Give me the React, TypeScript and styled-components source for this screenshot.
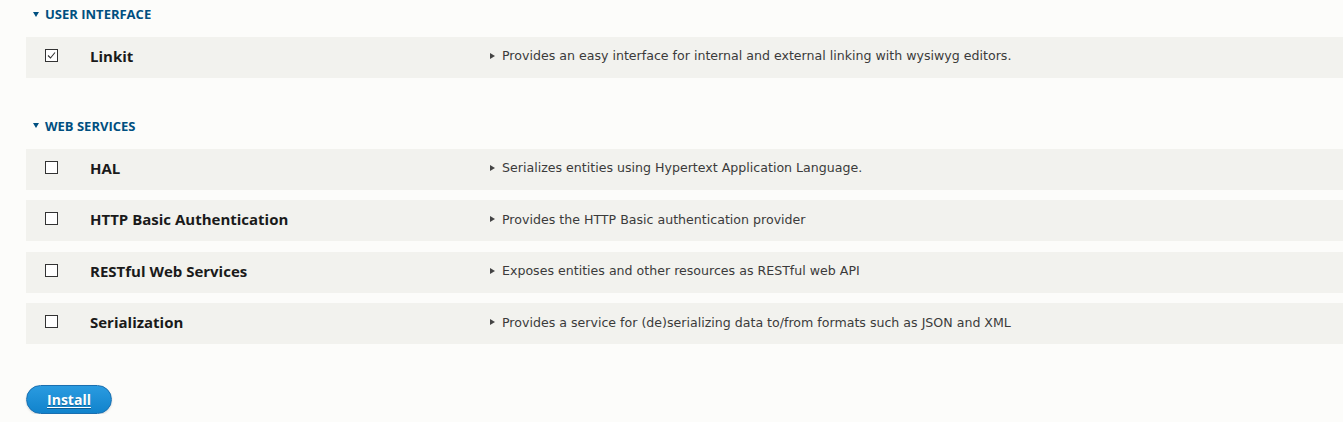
import React from "react";
import styled, { createGlobalStyle } from "styled-components";

const Global = createGlobalStyle`
  html, body { margin: 0; padding: 0; background: #fcfcfa; }
  body { font-family: "Open Sans", "Noto Sans", sans-serif; color: #222; }
`;

const Page = styled.div`
  padding: 6px 0 0 26px;
  display: flex;
  flex-direction: column;
`;

const Section = styled.section<{ $gap: number }>`
  display: flex;
  flex-direction: column;
  gap: 10.4px;
  margin-bottom: ${(p) => p.$gap}px;
`;

const Heading = styled.h3`
  margin: 0 0 4.6px 0;
  padding-left: 7px;
  display: flex;
  align-items: center;
  gap: 6px;
  height: 16px;
  font-size: 13px;
  font-weight: 700;
  text-transform: uppercase;
  color: #004f80;
`;

const Caret = styled.span`
  width: 0;
  height: 0;
  border-left: 3px solid transparent;
  border-right: 3px solid transparent;
  border-top: 5px solid #004f80;
`;

const Row = styled.div`
  display: grid;
  grid-template-columns: 64px 400px 1fr;
  align-items: center;
  height: 41px;
  background: #f2f2ee;
  margin-right: -40px;
`;

const CheckCell = styled.div`
  padding-left: 19px;
  display: flex;
  align-items: center;
  margin-top: -4px;
`;

const Box = styled.span`
  width: 11px;
  height: 11px;
  border: 1px solid #333;
  background: #fff;
  display: flex;
  align-items: center;
  justify-content: center;
`;

const Label = styled.div`
  font-size: 15px;
  font-weight: 700;
  color: #1a1a1a;
  margin-top: -3px;
`;

const Desc = styled.div`
  display: flex;
  align-items: center;
  gap: 7px;
  font-family: "DejaVu Sans", Verdana, sans-serif;
  font-size: 12.6px;
  color: #3b3b3b;
  margin-top: -3px;
`;

const SmallArrow = styled.span`
  width: 0;
  height: 0;
  border-top: 3px solid transparent;
  border-bottom: 3px solid transparent;
  border-left: 5px solid #444;
`;

const Button = styled.button`
  align-self: flex-start;
  width: 86px;
  height: 29px;
  border-radius: 20px;
  border: 1px solid #1a6fb0;
  background: linear-gradient(#2a9be0, #1183cc);
  color: #fff;
  font-family: "Open Sans", "Noto Sans", sans-serif;
  font-weight: 700;
  font-size: 14px;
  text-decoration: underline;
  text-decoration-thickness: 1px;
  text-underline-offset: 2px;
  text-shadow: 0 1px 0 rgba(0, 0, 0, 0.3);
  box-shadow: 0 1px 2px rgba(0, 0, 0, 0.15);
  cursor: pointer;
`;

type Mod = { name: string; desc: string; checked?: boolean };

const sections: { title: string; mods: Mod[]; gap: number }[] = [
  {
    title: "User interface",
    gap: 40,
    mods: [
      {
        name: "Linkit",
        desc: "Provides an easy interface for internal and external linking with wysiwyg editors.",
        checked: true,
      },
    ],
  },
  {
    title: "Web services",
    gap: 41,
    mods: [
      { name: "HAL", desc: "Serializes entities using Hypertext Application Language." },
      { name: "HTTP Basic Authentication", desc: "Provides the HTTP Basic authentication provider" },
      { name: "RESTful Web Services", desc: "Exposes entities and other resources as RESTful web API" },
      {
        name: "Serialization",
        desc: "Provides a service for (de)serializing data to/from formats such as JSON and XML",
      },
    ],
  },
];

export default function App() {
  return (
    <>
      <Global />
      <Page>
        {sections.map((s) => (
          <Section key={s.title} $gap={s.gap}>
            <Heading>
              <Caret />
              {s.title}
            </Heading>
            {s.mods.map((m) => (
              <Row key={m.name}>
                <CheckCell>
                  <Box>
                    {m.checked && (
                      <svg width="9" height="9" viewBox="0 0 9 9">
                        <path d="M1 4.5 L3.5 7 L8 1.5" fill="none" stroke="#333" strokeWidth="1.1" />
                      </svg>
                    )}
                  </Box>
                </CheckCell>
                <Label>{m.name}</Label>
                <Desc>
                  <SmallArrow />
                  {m.desc}
                </Desc>
              </Row>
            ))}
          </Section>
        ))}
        <Button>Install</Button>
      </Page>
    </>
  );
}
